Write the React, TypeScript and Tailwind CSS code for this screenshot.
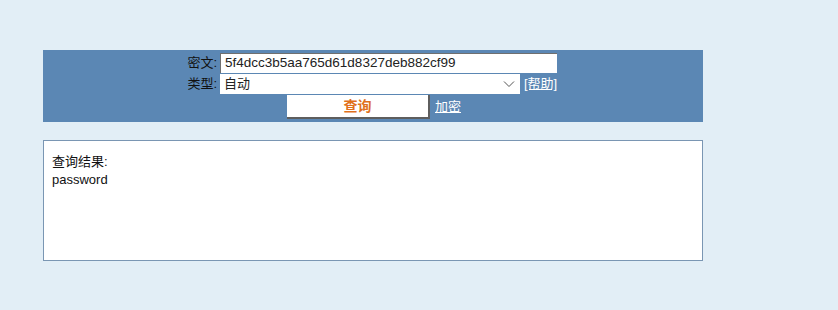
import React from 'react';

export default function App() {
  const font = { fontFamily: '"Liberation Sans", "Noto Sans CJK SC", Arial, sans-serif' };

  return (
    <div className="min-h-[310px] w-full bg-[#e2eef6] pt-[50px] pl-[43px]" style={font}>
      {/* Query form */}
      <div className="w-[660px] bg-[#5b87b4] pt-[3px] pb-[3px] text-[13px]">
        <div className="w-[376px] mx-auto flex flex-col gap-[1px]">
          <div className="flex items-center">
            <span className="w-[32px] text-right text-[#111]">密文:</span>
            <input
              className="ml-[3px] w-[337px] h-[20px] bg-white border-t border-l border-[#6f6f6f] px-[4px] text-[13.5px] text-[#222] outline-none"
              defaultValue="5f4dcc3b5aa765d61d8327deb882cf99"
            />
          </div>
          <div className="flex items-center">
            <span className="w-[32px] text-right text-[#111]">类型:</span>
            <div className="ml-[3px] w-[300px] h-[20px] bg-white flex items-center justify-between px-[4px] text-[#222]">
              <span>自动</span>
              <svg width="12" height="8" viewBox="0 0 12 8" className="mr-[1px]">
                <path d="M1 1.5 L6 6.5 L11 1.5" fill="none" stroke="#555" strokeWidth="1" />
              </svg>
            </div>
            <a className="ml-[4px] text-white underline cursor-pointer">[帮助]</a>
          </div>
          <div className="flex items-center justify-center">
            <button className="ml-[2px] w-[143px] h-[24px] bg-white border-r-2 border-b-2 border-[#5e5e5e] text-[#e0701c] text-[14px] font-semibold">
              查询
            </button>
            <a className="ml-[5px] text-white underline cursor-pointer">加密</a>
          </div>
        </div>
      </div>

      {/* Result */}
      <div className="mt-[18px] w-[660px] h-[121px] bg-white border border-[#7a96b3] pt-[12px] pl-[8px] text-[13px] leading-[18px] text-[#111]">
        <div>查询结果:</div>
        <div>password</div>
      </div>
    </div>
  );
}
